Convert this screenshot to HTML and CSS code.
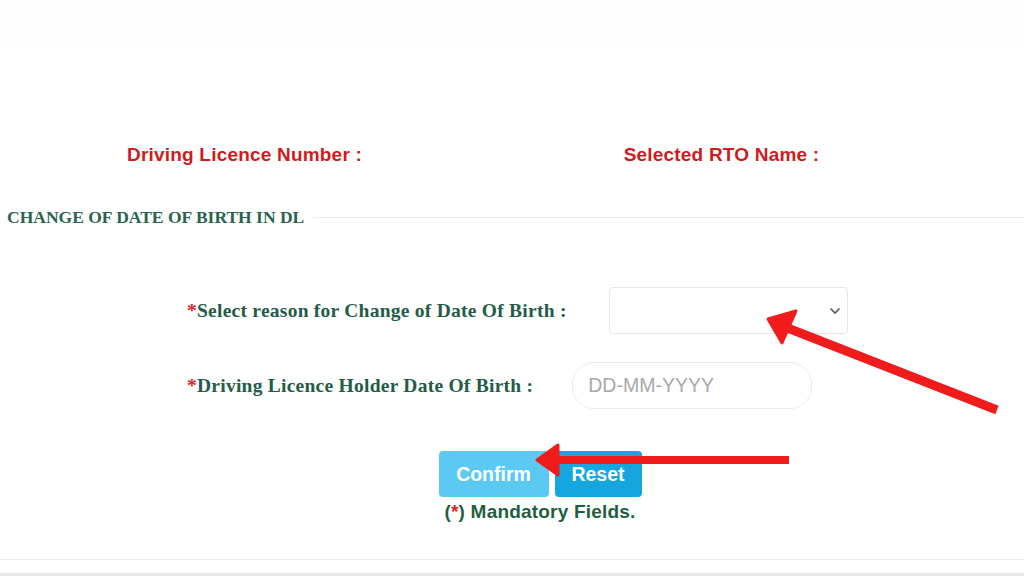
FILE: index.html
```html
<!DOCTYPE html>
<html lang="en">
<head>
<meta charset="utf-8">
<title>Change of Date of Birth in DL</title>
<link rel="stylesheet" href="styles.css">
</head>
<body>
<div class="page">
  <div class="topband"></div>
  <div class="info">
    <div class="info-item">Driving Licence Number :</div>
    <div class="info-item">Selected RTO Name :</div>
  </div>
  <div class="section-head">
    <span class="section-title">CHANGE OF DATE OF BIRTH IN DL</span>
    <span class="section-line"></span>
  </div>
  <div class="form">
    <div class="form-row row-1">
      <label class="label"><span class="req">*</span>Select reason for Change of Date Of Birth :</label>
      <div class="select">
        <svg class="chev" width="12" height="8" viewBox="0 0 12 8"><path d="M1.5 1.5 L6 6 L10.5 1.5" fill="none" stroke="#555" stroke-width="1.6"/></svg>
      </div>
    </div>
    <div class="form-row row-2">
      <label class="label"><span class="req">*</span>Driving Licence Holder Date Of Birth :</label>
      <div class="date-input">DD-MM-YYYY</div>
    </div>
  </div>
  <div class="actions">
    <div class="buttons">
      <button class="btn btn-confirm">Confirm</button>
      <button class="btn btn-reset">Reset</button>
    </div>
    <div class="mandatory">(<span class="req">*</span>) Mandatory Fields.</div>
  </div>
  <div class="footer-line"></div>
  <div class="footer-band"></div>

  <svg class="annot" width="1024" height="576" viewBox="0 0 1024 576">
    <line x1="997" y1="410" x2="785" y2="327" stroke="#f01c1c" stroke-width="9" stroke-linecap="butt"/>
    <polygon points="768,319 796,311 782,343" fill="#f01c1c" stroke="#f01c1c" stroke-width="3" stroke-linejoin="round"/>
    <line x1="789" y1="460" x2="552" y2="460" stroke="#f01c1c" stroke-width="8"/>
    <polygon points="537,460 558,445 558,475" fill="#f01c1c" stroke="#f01c1c" stroke-width="3" stroke-linejoin="round"/>
  </svg>
</div>
</body>
</html>
```

FILE: styles.css
```css
* { box-sizing: border-box; }
html, body { margin: 0; padding: 0; background: #ffffff; }
.page {
  position: relative;
  width: 1024px;
  height: 576px;
  overflow: hidden;
  font-family: "Liberation Sans", Arial, sans-serif;
}
.topband { height: 48px; background: #fdfdfd; }

.info {
  display: grid;
  grid-template-columns: 477px 477px;
  padding-left: 6px;
  margin-top: 96px;
}
.info-item {
  text-align: center;
  color: #d01b1e;
  font-weight: bold;
  font-size: 19px;
  letter-spacing: 0.2px;
  line-height: 22px;
}

.section-head {
  display: flex;
  align-items: center;
  margin-top: 41px;
  padding-left: 7px;
  gap: 9px;
}
.section-title {
  font-family: "Liberation Serif", "Times New Roman", serif;
  font-weight: bold;
  font-size: 17.5px;
  color: #2a6450;
  line-height: 20px;
  white-space: nowrap;
}
.section-line { flex: 1; border-top: 1px solid #ececec; }

.form { margin-top: 60px; padding-left: 187px; display: flex; flex-direction: column; gap: 28px; }
.form-row { display: flex; align-items: center; }
.row-1 { gap: 42px; }
.row-2 { gap: 39px; }
.label {
  font-family: "Liberation Serif", "Times New Roman", serif;
  font-weight: bold;
  font-size: 19.5px;
  letter-spacing: 0.25px;
  color: #235c47;
  white-space: nowrap;
}
.req { color: #d9232a; }
.select {
  width: 239px;
  height: 47px;
  border: 1px solid #e6e6e6;
  border-radius: 4px;
  background: #fff;
  display: flex;
  align-items: center;
  justify-content: flex-end;
  padding-right: 6px;
}
.date-input {
  width: 240px;
  height: 47px;
  border: 1px solid #ececec;
  border-radius: 22px;
  display: flex;
  align-items: center;
  padding-left: 15px;
  color: #a9a9a9;
  font-size: 19.5px;
}

.actions {
  margin-top: 42px;
  padding-left: 56px;
  display: flex;
  flex-direction: column;
  align-items: center;
}
.buttons { display: flex; gap: 6px; }
.btn {
  height: 46px;
  border: none;
  border-radius: 4px;
  color: #fff;
  font-family: "Liberation Sans", Arial, sans-serif;
  font-weight: bold;
  font-size: 19.5px;
  padding: 0;
}
.btn-confirm { width: 110px; background: #5cc9f2; }
.btn-reset { width: 87px; background: #15a5df; }
.mandatory {
  margin-top: 4px;
  font-weight: bold;
  font-size: 19px;
  letter-spacing: 0.2px;
  color: #1f5e3f;
  line-height: 22px;
}

.footer-line { margin-top: 36px; border-top: 1px solid #eeeeee; }
.footer-band { margin-top: 13px; height: 4px; background: #e8e8e8; }

.annot { position: absolute; left: 0; top: 0; pointer-events: none; }
```
